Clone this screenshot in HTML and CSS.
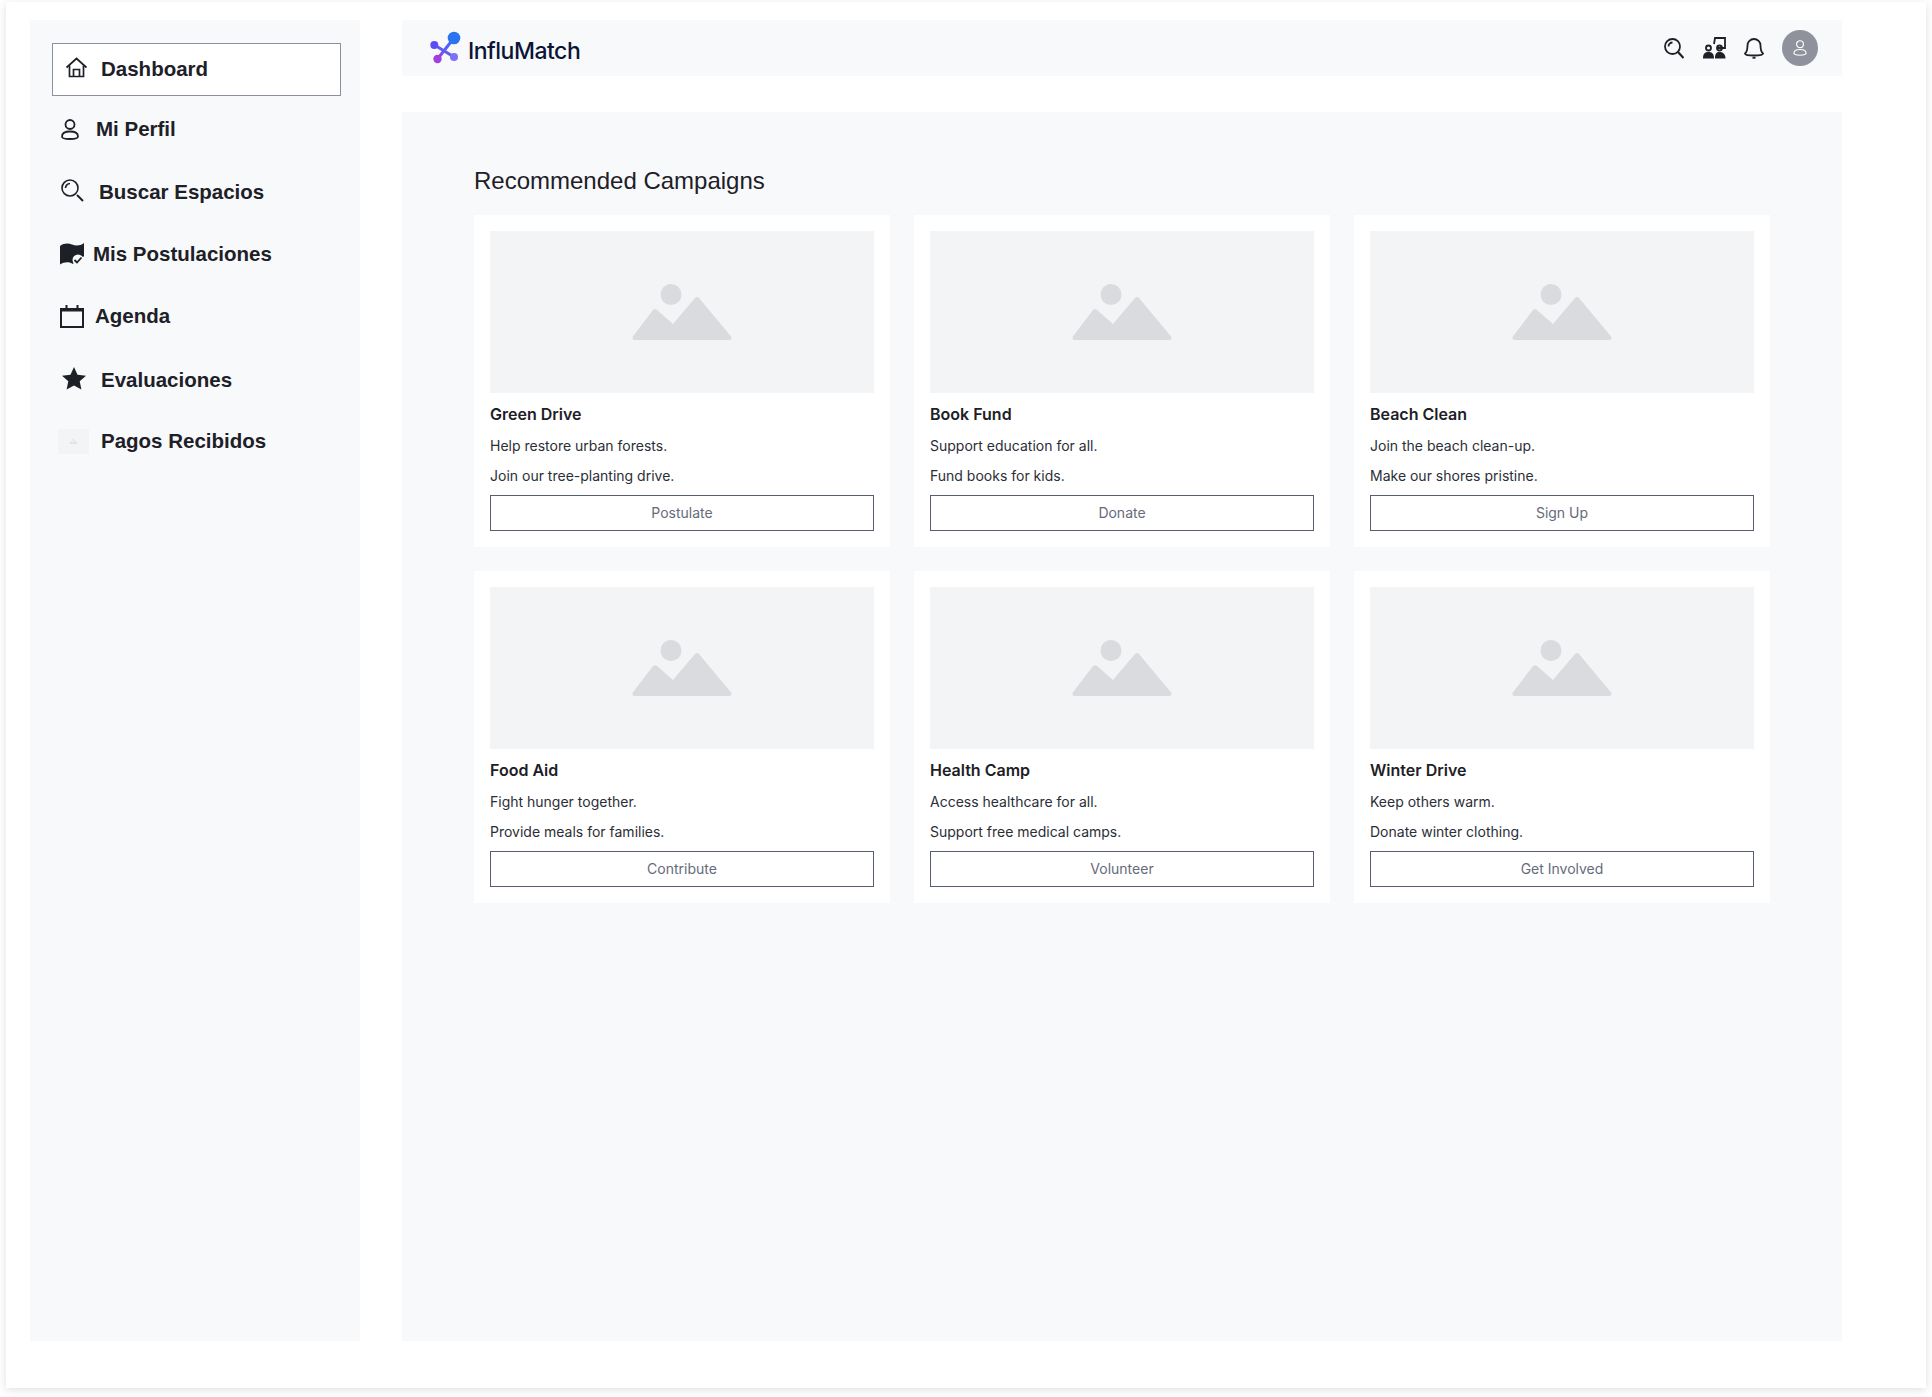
FILE: index.html
```html
<!DOCTYPE html>
<html>
	<head>
		<title>InfluMatch</title>
		<link rel="stylesheet" href="styles.css">
	</head>
	<body>
		<div class="frame">
			<aside class="sidebar">
				<a class="nav-item nav-dashboard">
					<svg class="nav-icon" width="21" height="21" viewBox="0 0 21 21" fill="none" stroke="#1d2026" stroke-width="1.7"><path d="M.5 10.500 10.500 1.500 20.500 10.500"/><path d="M3.500 8.500V19.500H17.500V8.500"/><path d="M7.500 19.500V12.500H13.500V19.500"/></svg>
					<span>Dashboard</span>
				</a>
				<a class="nav-item nav-profile">
					<svg class="nav-icon" width="18" height="21" viewBox="0 0 18 21" fill="none" stroke="#1d2026" stroke-width="1.8"><circle cx="9" cy="5.500" r="4.500"/><path d="M1 17.500C1 14.500 4 12.500 9 12.500S17 14.500 17 17.500C17 19.500 15 20 9 20S1 19.500 1 17.500Z"/></svg>
					<span>Mi Perfil</span>
				</a>
				<a class="nav-item nav-search">
					<svg class="nav-icon" width="23" height="23" viewBox="0 0 23 23" fill="none" stroke="#1d2026" stroke-width="1.6"><circle cx="9" cy="9" r="8"/><path d="M4.500 9A4.500 4.500 0 0 1 9 4.500"/><path d="M16 16 22 22" stroke-width="2"/></svg>
					<span>Buscar Espacios</span>
				</a>
				<a class="nav-item nav-apps">
					<svg class="nav-icon" width="24" height="22" viewBox="0 0 24 22"><path fill="#1d2026" d="M0 3C4 0 8 0 12 1.500S20 3 24 0V13.500L17 15 13 21C9 18.500 4 19 0 21.500Z"/><circle cx="18" cy="17" r="5.500" fill="#f8f9fb"/><path d="M14.500 17 17 19.500 21.500 14.500" fill="none" stroke="#1d2026" stroke-width="1.800"/></svg>
					<span>Mis Postulaciones</span>
				</a>
				<a class="nav-item nav-agenda">
					<svg class="nav-icon" width="24" height="23" viewBox="0 0 24 23" fill="none" stroke="#1d2026" stroke-width="2"><rect x="1" y="4" width="22" height="18"/><path d="M1 5H23" stroke-width="3"/><path d="M6.500 0V4M17.500 0V4"/></svg>
					<span>Agenda</span>
				</a>
				<a class="nav-item nav-reviews">
					<svg class="nav-icon" width="24" height="23" viewBox="0 0 24 23"><path fill="#1d2026" d="M12 0 15.500 7.800 24 8.700 17.700 14.300 19.400 22.600 12 18.400 4.600 22.600 6.300 14.300 0 8.700 8.500 7.800Z"/></svg>
					<span>Evaluaciones</span>
				</a>
				<a class="nav-item nav-payments">
					<div class="thumb">
						<svg width="9" height="5" viewBox="0 0 100 56"><circle cx="39" cy="10.500" r="10.500" fill="#e2e3e6"/><path fill="#e2e3e6" d="M0 56 23 25 41 40 65 13 100 56Z"/></svg>
					</div>
					<span>Pagos Recibidos</span>
				</a>
			</aside>

			<div class="content">
				<header class="topbar">
					<div class="brand">
						<svg width="32" height="34" viewBox="0 0 32 34" fill="none">
							<defs>
								<linearGradient id="logoGrad" x1="26" y1="5" x2="6" y2="30" gradientUnits="userSpaceOnUse">
									<stop offset="0" stop-color="#2a74f0"/>
									<stop offset="0.5" stop-color="#5a5cf4"/>
									<stop offset="1" stop-color="#a23fdc"/>
								</linearGradient>
							</defs>
							<path d="M24 7 7.500 28" stroke="url(#logoGrad)" stroke-width="3"/>
							<path d="M4.500 14 24 26" stroke="#5f5cf5" stroke-width="3"/>
							<circle cx="24" cy="7" r="6.300" fill="#2a74f0"/>
							<circle cx="4.300" cy="14" r="4" fill="#5a4df4"/>
							<circle cx="24" cy="26" r="4" fill="#7d72f6"/>
							<circle cx="7.500" cy="28" r="4.200" fill="#a23fdc"/>
						</svg>
						<span class="brand-name">InfluMatch</span>
					</div>
					<div class="top-actions">
						<svg class="top-search" width="20" height="21" viewBox="0 0 20 21" fill="none" stroke="#1d2026" stroke-width="1.800"><circle cx="8.500" cy="8.500" r="7.500"/><path d="M4.500 8.500A4 4 0 0 1 8.500 4.500"/><path d="M14 14 19.500 20" stroke-width="2.200"/></svg>
						<svg width="23" height="22" viewBox="0 0 23 22" fill="none" stroke="#1d2026" stroke-width="1.800"><path d="M11 7 12 1H22V11H15"/><circle cx="5.500" cy="11" r="2.500"/><circle cx="16.500" cy="11" r="2.500"/><path fill="#1d2026" stroke="none" d="M0 21.500C0 16.500 2 15 5.500 15S11 16.500 11 21.500ZM12 21.500C12 16.500 13.500 15 16.500 15S22.500 16.500 22.500 21.500Z"/></svg>
						<svg width="20" height="22" viewBox="0 0 20 22" fill="none" stroke="#1d2026" stroke-width="1.800"><path d="M1 16.500C3.500 14.500 3.500 12 3.500 8.500A6.500 6.500 0 0 1 16.500 8.500C16.500 12 16.500 14.500 19 16.500C19 18 16 18.500 10 18.500S1 18 1 16.500Z"/><path d="M8.500 20.800H11.500"/></svg>
						<div class="avatar">
							<svg width="14" height="16" viewBox="0 0 18 21" fill="none" stroke="#fff" stroke-width="1.500"><circle cx="9" cy="5.500" r="4.500"/><path d="M1 17.500C1 14.500 4 12.500 9 12.500S17 14.500 17 17.500C17 19.500 15 20 9 20S1 19.500 1 17.500Z"/></svg>
						</div>
					</div>
				</header>

				<main class="panel">
					<h2 class="panel-title">Recommended Campaigns</h2>
					<div class="cards">
						<div class="card">
							<div class="card-img"><svg width="100" height="56" viewBox="0 0 100 56"><circle cx="39" cy="10.500" r="10.500" fill="#d9dbdf"/><path fill="#d9dbdf" d="M.5 53 21 26Q23 24.500 25 26L41 40 63 14Q65 12 67 14L99.500 53Q100 55 98 56H2Q0 55 .5 53Z"/></svg></div>
							<h3>Green Drive</h3>
							<p>Help restore urban forests.</p>
							<p>Join our tree-planting drive.</p>
							<button>Postulate</button>
						</div>
						<div class="card">
							<div class="card-img"><svg width="100" height="56" viewBox="0 0 100 56"><circle cx="39" cy="10.500" r="10.500" fill="#d9dbdf"/><path fill="#d9dbdf" d="M.5 53 21 26Q23 24.500 25 26L41 40 63 14Q65 12 67 14L99.500 53Q100 55 98 56H2Q0 55 .5 53Z"/></svg></div>
							<h3>Book Fund</h3>
							<p>Support education for all.</p>
							<p>Fund books for kids.</p>
							<button>Donate</button>
						</div>
						<div class="card">
							<div class="card-img"><svg width="100" height="56" viewBox="0 0 100 56"><circle cx="39" cy="10.500" r="10.500" fill="#d9dbdf"/><path fill="#d9dbdf" d="M.5 53 21 26Q23 24.500 25 26L41 40 63 14Q65 12 67 14L99.500 53Q100 55 98 56H2Q0 55 .5 53Z"/></svg></div>
							<h3>Beach Clean</h3>
							<p>Join the beach clean-up.</p>
							<p>Make our shores pristine.</p>
							<button>Sign Up</button>
						</div>
						<div class="card">
							<div class="card-img"><svg width="100" height="56" viewBox="0 0 100 56"><circle cx="39" cy="10.500" r="10.500" fill="#d9dbdf"/><path fill="#d9dbdf" d="M.5 53 21 26Q23 24.500 25 26L41 40 63 14Q65 12 67 14L99.500 53Q100 55 98 56H2Q0 55 .5 53Z"/></svg></div>
							<h3>Food Aid</h3>
							<p>Fight hunger together.</p>
							<p>Provide meals for families.</p>
							<button>Contribute</button>
						</div>
						<div class="card">
							<div class="card-img"><svg width="100" height="56" viewBox="0 0 100 56"><circle cx="39" cy="10.500" r="10.500" fill="#d9dbdf"/><path fill="#d9dbdf" d="M.5 53 21 26Q23 24.500 25 26L41 40 63 14Q65 12 67 14L99.500 53Q100 55 98 56H2Q0 55 .5 53Z"/></svg></div>
							<h3>Health Camp</h3>
							<p>Access healthcare for all.</p>
							<p>Support free medical camps.</p>
							<button>Volunteer</button>
						</div>
						<div class="card">
							<div class="card-img"><svg width="100" height="56" viewBox="0 0 100 56"><circle cx="39" cy="10.500" r="10.500" fill="#d9dbdf"/><path fill="#d9dbdf" d="M.5 53 21 26Q23 24.500 25 26L41 40 63 14Q65 12 67 14L99.500 53Q100 55 98 56H2Q0 55 .5 53Z"/></svg></div>
							<h3>Winter Drive</h3>
							<p>Keep others warm.</p>
							<p>Donate winter clothing.</p>
							<button>Get Involved</button>
						</div>
					</div>
				</main>
			</div>
		</div>
	</body>
</html>
```

FILE: styles.css
```css
* {
	margin: 0; padding: 0;
	box-sizing: border-box;
}

body {
	font-family: Inter, sans-serif;
	color: #1d2026;
	background: #fff;
	padding: 2px 6px 9px;
}

.frame {
	display: flex;
	gap: 42px;
	height: 1386px;
	padding: 18px 84px 47px 24px;
	background: #fff;
	box-shadow: 0 2px 8px rgba(29,32,38,0.14);
}

.sidebar {
	width: 330px;
	padding: 23px 19px 0 22px;
	background: #f8f9fb;
}

.nav-item {
	display: flex;
	align-items: center;
	height: 40px;
	font-family: "Liberation Sans", sans-serif;
	font-size: 20.5px;
	font-weight: 700;
}

.nav-dashboard {
	height: 53px;
	padding: 0 0 1px 13px;
	gap: 14px;
	background: #fff;
	border: 1px solid #8d90a3;
}

.nav-profile { margin-top: 13px; padding-left: 9px; gap: 17px; }
.nav-search { margin-top: 23px; padding-left: 9px; gap: 15px; }
.nav-apps { margin-top: 22px; padding-left: 8px; gap: 9px; }
.nav-agenda { margin-top: 22px; padding-left: 8px; gap: 11px; }
.nav-reviews { margin-top: 24px; padding-left: 10px; gap: 15px; }
.nav-payments { margin-top: 21px; padding-left: 6px; gap: 12px; }

.nav-icon {
	flex: none;
}

.nav-search .nav-icon, .nav-dashboard .nav-icon, .nav-reviews .nav-icon {
	margin-top: -4px;
}

.thumb {
	display: flex;
	align-items: center;
	justify-content: center;
	width: 31px; height: 25px;
	background: #f3f4f6;
}

.content {
	flex: 1;
	display: flex;
	flex-direction: column;
	gap: 36px;
}

.topbar {
	display: flex;
	align-items: center;
	justify-content: space-between;
	height: 56px;
	padding: 0 24px 0 28px;
	background: #f8f9fb;
}

.brand {
	display: flex;
	align-items: center;
	gap: 6px;
}

.brand-name {
	font-size: 23px;
	font-weight: 500;
	letter-spacing: -0.5px;
	color: #0b1437;
	margin-top: 6px;
}

.top-actions {
	display: flex;
	align-items: center;
	gap: 18px;
}

.top-search {
	margin-right: 1px;
}

.avatar {
	display: flex;
	align-items: center;
	justify-content: center;
	width: 36px; height: 36px;
	border-radius: 100%;
	background: #8f929d;
}

.panel {
	flex: 1;
	padding: 53px 72px 0;
	background: #f8f9fb;
}

.panel-title {
	font-family: "Liberation Sans", sans-serif;
	font-size: 24px;
	font-weight: 400;
	line-height: 32px;
	margin-bottom: 18px;
}

.cards {
	display: grid;
	grid-template-columns: repeat(3, 416px);
	gap: 24px;
}

.card {
	padding: 16px;
	background: #fff;
}

.card-img {
	display: flex;
	align-items: center;
	justify-content: center;
	height: 162px;
	background: #f3f4f6;
}

.card h3 {
	margin-top: 9px;
	font-size: 16px;
	font-weight: 600;
	line-height: 24px;
}

.card p {
	margin-top: 10px;
	font-size: 14px;
	line-height: 20px;
	color: #2b2e36;
}

.card button {
	display: block;
	width: 100%;
	height: 36px;
	margin-top: 9px;
	padding-bottom: 2px;
	font-family: Inter, sans-serif;
	font-size: 14px;
	color: #656b7b;
	background: #fff;
	border: 1px solid #565e74;
}
```
